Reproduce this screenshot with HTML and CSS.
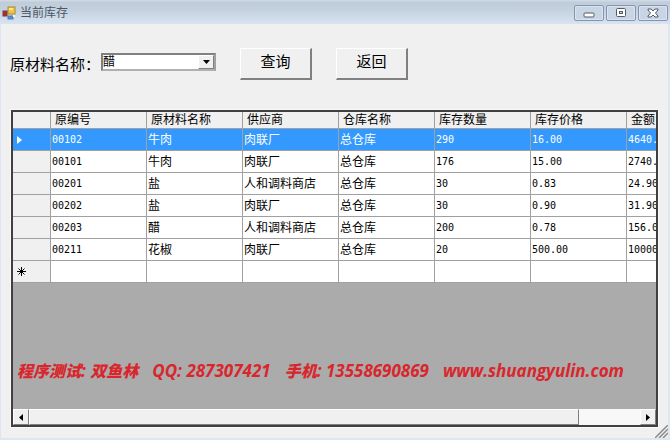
FILE: index.html
```html
<!DOCTYPE html>
<html lang="zh-CN">
<head>
  <meta charset="UTF-8">
  <title>当前库存</title>
  <link rel="stylesheet" href="styles.css">
</head>
<body>
<header class="titlebar">
  <svg class="app-icon" width="14" height="14" viewBox="0 0 14 14">
    <rect x="6" y="1" width="7" height="7" fill="#f0c63c" stroke="#a98a2c"/>
    <path d="M7 2h4v2H7z" fill="#fbe79a"/>
    <rect x="1" y="5" width="4" height="5" fill="#b5292b" stroke="#7d3a3a"/>
    <rect x="6" y="10" width="5" height="3" fill="#4f8de0" stroke="#5a7cae"/>
    <path d="M11 9h2v2h-2z" fill="#f4f6fa"/>
  </svg>
  <h1 class="title">当前库存</h1>
  <div class="window-buttons">
    <button type="button" aria-label="最小化">
      <svg width="14" height="12" viewBox="0 0 14 12"><rect x="2" y="6" width="10" height="4" rx="1" fill="#fff" stroke="#535b66"/></svg>
    </button>
    <button type="button" aria-label="最大化">
      <svg width="14" height="12" viewBox="0 0 14 12"><rect x="2.500" y="1.500" width="9" height="8" rx="1" fill="#fff" stroke="#535b66"/><rect x="5.500" y="4.500" width="3" height="2" fill="#cbd7e4" stroke="#535b66"/></svg>
    </button>
    <button type="button" aria-label="关闭">
      <svg width="14" height="12" viewBox="0 0 14 12"><path d="M2 2h3l2 2 2-2h3v1L9.500 6 12 9v1H9L7 8l-2 2H2V9l2.500-3L2 3z" fill="#fff" stroke="#535b66"/></svg>
    </button>
  </div>
</header>

<main class="client">
  <form class="search">
    <label for="material">原材料名称：</label>
    <div class="combo">
      <select id="material">
        <option>醋</option>
        <option>盐</option>
        <option>牛肉</option>
        <option>花椒</option>
      </select>
      <span class="combo-arrow"><svg width="7" height="4" viewBox="0 0 7 4"><path d="M0 0h7L3.500 4z"/></svg></span>
    </div>
    <button class="btn" type="button">查询</button>
    <button class="btn" type="button">返回</button>
  </form>

  <section class="grid">
    <div class="grid-view">
      <table>
        <colgroup>
          <col class="col-head"><col><col><col><col><col><col><col>
        </colgroup>
        <thead>
          <tr><th></th><th>原编号</th><th>原材料名称</th><th>供应商</th><th>仓库名称</th><th>库存数量</th><th>库存价格</th><th>金额</th></tr>
        </thead>
        <tbody>
          <tr class="selected"><th><svg width="5" height="8" viewBox="0 0 5 8"><path d="M0 0l5 4-5 4z" fill="#fff"/></svg></th><td class="num">00102</td><td>牛肉</td><td>肉联厂</td><td>总仓库</td><td class="num">290</td><td class="num">16.00</td><td class="num">4640.00</td></tr>
          <tr><th></th><td class="num">00101</td><td>牛肉</td><td>肉联厂</td><td>总仓库</td><td class="num">176</td><td class="num">15.00</td><td class="num">2740.00</td></tr>
          <tr><th></th><td class="num">00201</td><td>盐</td><td>人和调料商店</td><td>总仓库</td><td class="num">30</td><td class="num">0.83</td><td class="num">24.90</td></tr>
          <tr><th></th><td class="num">00202</td><td>盐</td><td>肉联厂</td><td>总仓库</td><td class="num">30</td><td class="num">0.90</td><td class="num">31.90</td></tr>
          <tr><th></th><td class="num">00203</td><td>醋</td><td>人和调料商店</td><td>总仓库</td><td class="num">200</td><td class="num">0.78</td><td class="num">156.00</td></tr>
          <tr><th></th><td class="num">00211</td><td>花椒</td><td>肉联厂</td><td>总仓库</td><td class="num">20</td><td class="num">500.00</td><td class="num">10000.00</td></tr>
          <tr><th><svg width="9" height="9" viewBox="0 0 9 9"><path d="M4.500 0v9M0 4.500h9M1.500 1.500l6 6M7.500 1.500l-6 6" stroke="#000"/></svg></th><td></td><td></td><td></td><td></td><td></td><td></td><td></td></tr>
        </tbody>
      </table>
      <p class="contact">
        <span><b>程序测试</b>: <b>双鱼林</b></span>
        <span>QQ: 287307421</span>
        <span><b>手机</b>: 13558690869</span>
        <span>www.shuangyulin.com</span>
      </p>
    </div>
    <div class="scrollbar">
      <button type="button" aria-label="向左滚动"><svg width="4" height="7" viewBox="0 0 4 7"><path d="M4 0v7L0 3.500z"/></svg></button>
      <div class="track"><div class="thumb"></div></div>
      <button type="button" aria-label="向右滚动"><svg width="4" height="7" viewBox="0 0 4 7"><path d="M0 0v7l4-3.500z"/></svg></button>
    </div>
  </section>
  <svg class="grip" width="13" height="13" viewBox="0 0 13 13">
    <path d="M0 13L13 0M4 13l9-9M8 13l5-5" stroke="#8a8a8a" stroke-width="1.500"/>
  </svg>
</main>
</body>
</html>
```
FILE: styles.css
```css
* {
  box-sizing: border-box;
}

body {
  display: flex;
  flex-direction: column;
  min-height: 100vh;
  margin: 0;
  background: #f0f0f0;
  color: #000;
  font: 12px/16px "Liberation Sans", "Noto Sans CJK SC", sans-serif;
}

button,
select {
  color: inherit;
  font: inherit;
}

/* title bar */
.titlebar {
  display: flex;
  align-items: center;
  height: 24px;
  padding: 2px 2px 0;
  background: linear-gradient(#d3dce7, #c0ccda 10%, #c3d0de 40%, #d8e4f2);
}

.title {
  flex: 1;
  margin: 0 0 0 4px;
  color: #4c5663;
  font-size: 12px;
  font-weight: normal;
}

.window-buttons {
  display: flex;
  gap: 2px;
}

.window-buttons button {
  display: flex;
  align-items: center;
  justify-content: center;
  width: 30px;
  height: 16px;
  padding: 0;
  border: 1px solid #8496ae;
  border-radius: 2px;
  background: #c8d5e4;
  box-shadow: inset 0 0 0 1px #d9e4f0;
}

.client {
  position: relative;
  flex: 1;
  display: flex;
  flex-direction: column;
  padding: 24px 10px 11px;
  border: solid #dce7f3;
  border-width: 0 2px 2px 1px;
}

/* search form */
.search {
  display: flex;
  align-items: flex-start;
  gap: 24px;
  margin-bottom: 30px;
  font-size: 15px;
}

.search label {
  margin: 9px -23px 0 -1px;
}

.combo {
  position: relative;
  width: 115px;
  height: 18px;
  margin-top: 5px;
  border: 2px solid;
  border-color: #808080 #a0a0a0 #b0b0b0 #808080;
  background: #fff;
  font-size: 12px;
}

.combo select {
  display: block;
  width: 100%;
  height: 14px;
  padding: 0;
  border: 0;
  background: none;
  line-height: 14px;
  appearance: none;
}

.combo-arrow {
  position: absolute;
  top: 0;
  right: 0;
  display: flex;
  align-items: center;
  justify-content: center;
  width: 16px;
  height: 14px;
  border: 1px solid;
  border-color: #fff #808080 #808080 #fff;
  background: #f0f0f0;
  pointer-events: none;
}

.btn {
  width: 72px;
  height: 32px;
  padding: 0 0 4px;
  border: solid;
  border-width: 1px 2px 2px 1px;
  border-color: #fff #808080 #808080 #fff;
  background: #f0f0f0;
}

/* data grid */
.grid {
  flex: 1;
  display: flex;
  flex-direction: column;
  border: 2px solid #404040;
  background: #ababab;
  box-shadow: 0 0 0 1px #fafafa;
}

.grid-view {
  flex: 1;
  display: flex;
  flex-direction: column;
  justify-content: space-between;
  overflow: hidden;
}

table {
  width: 710px;
  border-collapse: separate;
  border-spacing: 0;
  table-layout: fixed;
}

col {
  width: 96px;
}

.col-head {
  width: 38px;
}

th,
td {
  height: 22px;
  padding: 0 1px;
  border: solid #a0a0a0;
  border-width: 0 1px 1px 0;
  font-weight: normal;
  text-align: left;
  white-space: nowrap;
}

td {
  background: #fff;
}

th {
  padding-left: 4px;
  background: #f0f0f0;
}

thead th {
  height: 17px;
  line-height: 16px;
}

th svg {
  display: block;
}

.num {
  font-family: "DejaVu Sans Mono", monospace;
  font-size: 10px;
}

.selected th,
.selected td {
  background: #3399ff;
  color: #fff;
}

.contact {
  display: flex;
  gap: 14px;
  margin: 0 0 28px 4px;
  color: #d9262c;
  font: italic bold 17px/20px "Open Sans", "Noto Sans CJK SC", sans-serif;
  white-space: nowrap;
}

.contact b {
  font-size: 16px;
}

/* horizontal scrollbar */
.scrollbar {
  display: flex;
  height: 16px;
}

.scrollbar button,
.thumb {
  border: 1px solid;
  border-color: #fff #808080 #808080 #fff;
  background: #f0f0f0;
}

.scrollbar button {
  display: flex;
  align-items: center;
  justify-content: center;
  width: 16px;
  padding: 0;
}

.track {
  flex: 1;
  background: #f8f8f8;
}

.thumb {
  width: 90%;
  height: 100%;
}

.grip {
  position: absolute;
  right: 0;
  bottom: 0;
}
```
